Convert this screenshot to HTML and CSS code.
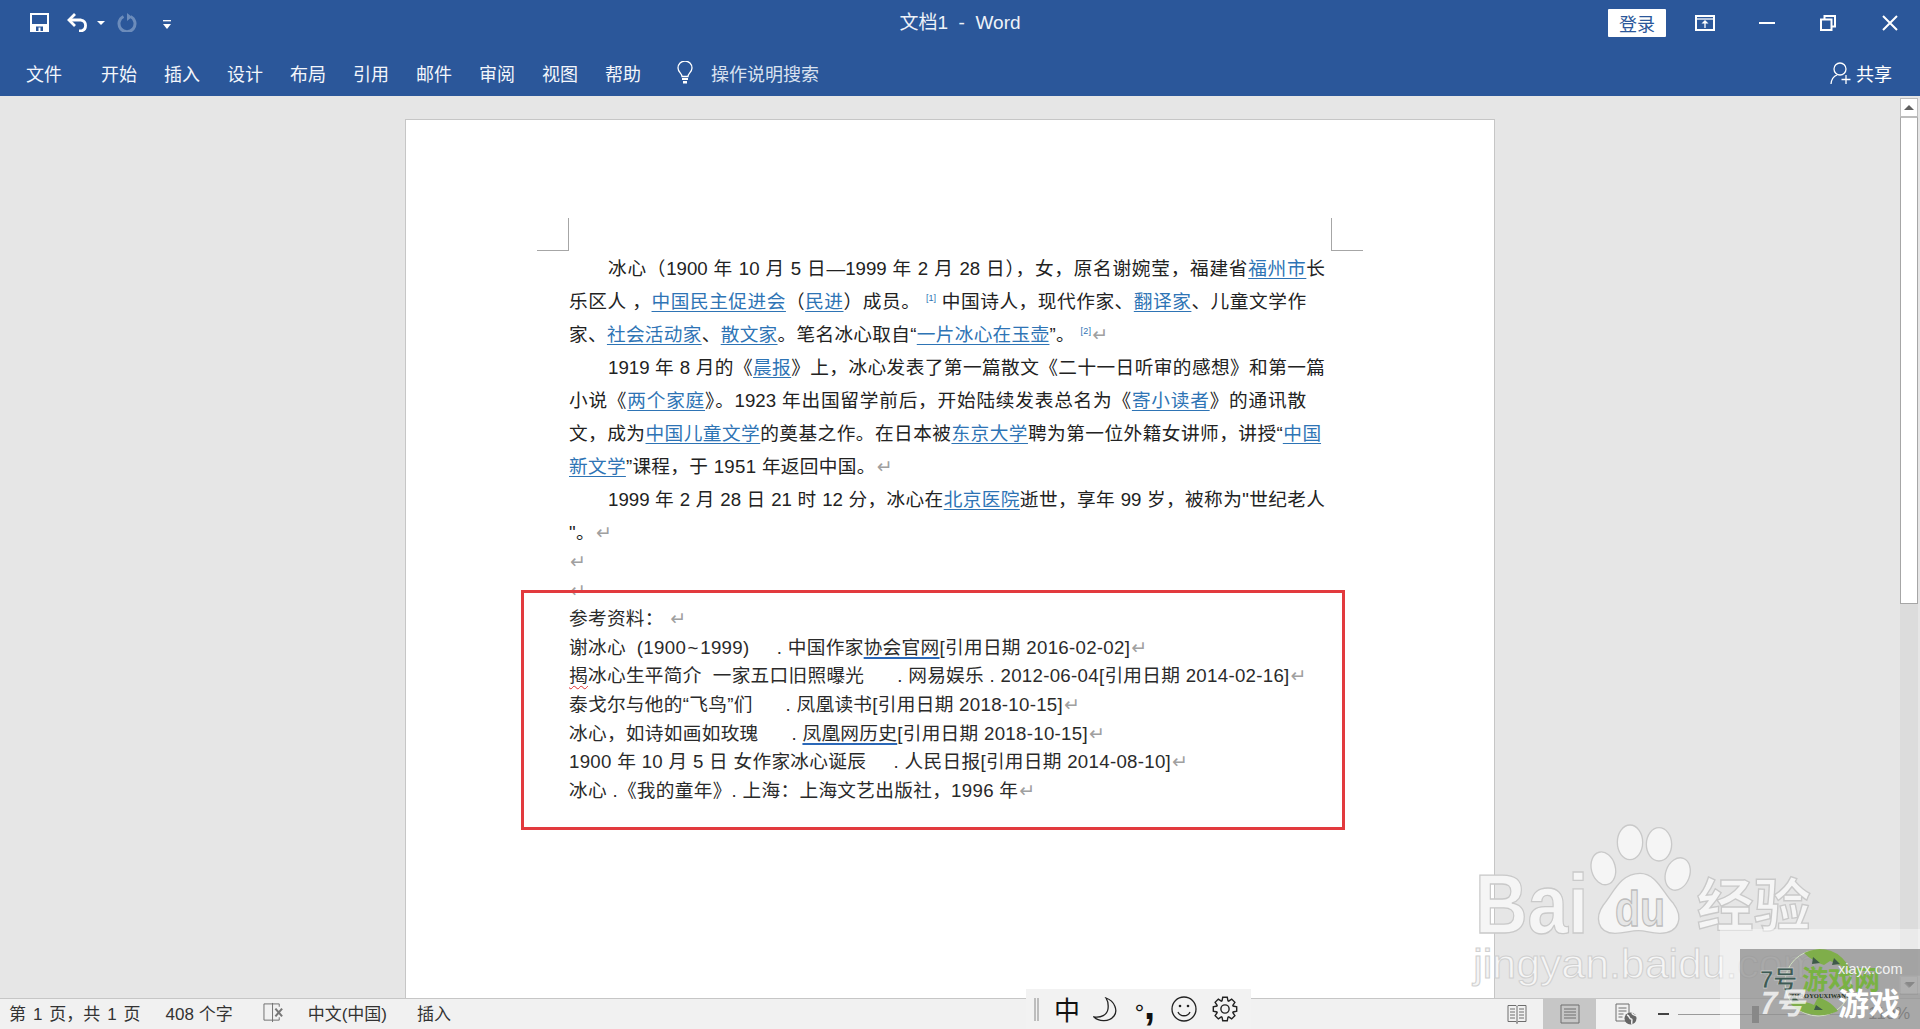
FILE: index.html
```html
<!DOCTYPE html>
<html lang="zh-CN">
<head>
<meta charset="utf-8">
<title>文档1 - Word</title>
<link rel="stylesheet" href="styles.css">
</head>
<body>
<div class="app">
  <header class="ribbon">
    <div class="titlerow">
      <div class="qat">
        <svg class="ico-save" viewBox="0 0 19 19"><path class="s-w" d="M1 1h17v17H1z"/><path class="f-w" d="M1 11h17v7H1z"/><path class="f-b" d="M6 13.500h7V18H6z"/><path class="f-w" d="M8.500 14.500h2V18h-2z"/></svg>
        <svg class="ico-undo" viewBox="0 0 22 19"><path class="s-w2" d="M2.500 7H14a5.600 5.600 0 0 1 0 11h-2"/><path class="s-w2" d="M8 1 2 7l6 6"/></svg>
        <svg class="ico-caret" viewBox="0 0 8 4"><path class="f-w" d="M0 0h8L4 4z"/></svg>
        <svg class="ico-redo" viewBox="0 0 20 19"><path class="s-d" d="M6.500 3.500a8 8 0 1 0 7 0"/><path class="f-d" d="M10 0v8l5-4z"/></svg>
        <svg class="ico-custom" viewBox="0 0 8 10"><path class="s-w1" d="M0 .7h8"/><path class="f-w" d="M0 4h8L4 9z"/></svg>
      </div>
      <div class="doc-title">文档1&nbsp;&nbsp;-&nbsp;&nbsp;Word</div>
      <div class="winctl">
        <button class="signin">登录</button>
        <svg class="ico-box" viewBox="0 0 20 16"><path class="s-w" d="M1 1h18v14H1z"/><path class="s-w1" d="M1 4h18"/><path class="s-w1" d="M10 13V7"/><path class="f-w" d="M6.500 8.500 10 5l3.500 3.500z"/></svg>
        <svg class="ico-min" viewBox="0 0 16 2"><path class="f-w" d="M0 0h16v2H0z"/></svg>
        <svg class="ico-restore" viewBox="0 0 16 16"><path class="s-w" d="M1 4.500h10.500V15H1z"/><path class="s-w" d="M4.500 4.500V1H15v10.500h-3.500"/></svg>
        <svg class="ico-close" viewBox="0 0 16 16"><path class="s-w" d="m1 1 14 14M15 1 1 15"/></svg>
      </div>
    </div>
    <div class="tabrow">
      <nav class="tabs">
        <span class="tab file">文件</span>
        <span class="tab">开始</span>
        <span class="tab">插入</span>
        <span class="tab">设计</span>
        <span class="tab">布局</span>
        <span class="tab">引用</span>
        <span class="tab">邮件</span>
        <span class="tab">审阅</span>
        <span class="tab">视图</span>
        <span class="tab">帮助</span>
      </nav>
      <div class="tell">
        <svg class="ico-bulb" viewBox="0 0 16 23"><path class="s-w1" d="M5 15.500c0-3-4-4.500-4-8.500a7 7 0 0 1 14 0c0 4-4 5.500-4 8.500z"/><path class="f-w" d="M5 17h6v2H5zM6 20h4v2.500H6z"/></svg>
        <span class="tell-text">操作说明搜索</span>
      </div>
      <div class="share">
        <svg class="ico-share" viewBox="0 0 22 23"><circle class="s-w1" cx="10" cy="7" r="6"/><path class="s-w1" d="M1 22c.5-5 3-8 6-9M16 13v9M11.500 17.500h9"/></svg>
        <span>共享</span>
      </div>
    </div>
  </header>

  <main class="workspace">
    <div class="doc-area">
      <section class="page">
        <i class="crop crop-l"></i>
        <i class="crop crop-r"></i>
        <div class="body-text">
          <div class="ln first w1">冰心（1900 年 10 月 5 日—1999 年 2 月 28 日），女，原名谢婉莹，福建省<a>福州市</a>长</div>
          <div class="ln w2">乐区人 ，<a>中国民主促进会</a>（<a>民进</a>）成员。 <sup>[1]</sup> 中国诗人，现代作家、<a>翻译家</a>、儿童文学作</div>
          <div class="ln">家、<a>社会活动家</a>、<a>散文家</a>。笔名冰心取自“<a>一片冰心在玉壶</a>”。 <sup>[2]</sup><span class="ret">↵</span></div>
          <div class="ln first w1">1919 年 8 月的《<a>晨报</a>》上，冰心发表了第一篇散文《二十一日听审的感想》和第一篇</div>
          <div class="ln w2">小说《<a>两个家庭</a>》。1923 年出国留学前后，开始陆续发表总名为《<a>寄小读者</a>》的通讯散</div>
          <div class="ln w3">文，成为<a>中国儿童文学</a>的奠基之作。在日本被<a>东京大学</a>聘为第一位外籍女讲师，讲授“<a>中国</a></div>
          <div class="ln"><a>新文学</a>”课程，于 1951 年返回中国。<span class="ret">↵</span></div>
          <div class="ln first w1">1999 年 2 月 28 日 21 时 12 分，冰心在<a>北京医院</a>逝世，享年 99 岁，被称为"世纪老人</div>
          <div class="ln">"。<span class="ret">↵</span></div>
        </div>
        <div class="refs">
          <div class="rl"><span class="ret">↵</span></div>
          <div class="rl"><span class="ret">↵</span></div>
          <div class="rl">参考资料： <span class="ret">↵</span></div>
          <div class="rl">谢冰心  <span class="tight">(1900 ~ 1999)</span>     . 中国作家<u class="gram">协会官网</u>[引用日期 2016-02-02]<span class="ret">↵</span></div>
          <div class="rl"><u class="spell">揭</u>冰心生平简介  一家五口旧照曝光      . 网易娱乐 . 2012-06-04[引用日期 2014-02-16]<span class="ret">↵</span></div>
          <div class="rl">泰戈尔与他的“飞鸟”们      . 凤凰读书[引用日期 2018-10-15]<span class="ret">↵</span></div>
          <div class="rl">冰心，如诗如画如玫瑰      . <u class="gram">凤凰网历史</u>[引用日期 2018-10-15]<span class="ret">↵</span></div>
          <div class="rl">1900 年 10 月 5 日 女作家冰心诞辰     . 人民日报[引用日期 2014-08-10]<span class="ret">↵</span></div>
          <div class="rl">冰心 .《我的童年》. 上海：上海文艺出版社，1996 年<span class="ret">↵</span></div>
        </div>
        <div class="redbox"></div>
      </section>
    </div>
    <aside class="vscroll">
      <div class="sb-up"><svg viewBox="0 0 10 5"><path d="M0 5h10L5 0z"/></svg></div>
      <div class="sb-thumb"></div>
      <div class="sb-track"></div>
      <div class="sb-down"><svg viewBox="0 0 10 5"><path d="M0 0h10L5 5z"/></svg></div>
    </aside>
  </main>

  <footer class="statusbar">
    <div class="st-left">
      <span class="st-page">第 1 页，共 1 页</span>
      <span class="st-words">408 个字</span>
      <svg class="ico-proof" viewBox="0 0 22 22"><path class="s-g" d="M10 2H1v17h9M10 1v20M10 2h7v3M10 19h7v-3"/><path class="s-g2" d="m13 7 7 8M20 7l-7 8"/></svg>
      <span class="st-lang">中文(中国)</span>
      <span class="st-ins">插入</span>
    </div>
    <div class="st-right">
      <svg class="v-read" viewBox="0 0 20 20"><path class="s-g" d="M1 1.500h8l1 1 1-1h8v16h-8l-1 1-1-1H1zM10 2.500V20M3 5h5M3 8h5M3 11h5M3 14h5M12 5h5M12 8h5M12 11h5M12 14h5"/></svg>
      <div class="v-print"><svg viewBox="0 0 20 20"><path class="s-g" d="M1 1h18v18H1zM4 5h12M4 8h12M4 11h12M4 14h12"/></svg></div>
      <svg class="v-web" viewBox="0 0 22 22"><path class="s-g" d="M1 1h13v17H1zM3.500 5h8M3.500 8h8M3.500 11h5M3.500 14h4"/><circle class="f-g" cx="15.500" cy="15.500" r="6"/><path class="s-wt" d="M12 12c3 1 2 4 4 4s0 3 1 5M17 10c0 2 3 2 4 3"/></svg>
      <div class="zoom">
        <i class="z-minus"></i>
        <div class="z-line"><i class="z-thumb"></i></div>
        <span class="z-val">110%</span>
      </div>
    </div>
  </footer>

  <div class="ime">
    <i class="ime-grip"></i>
    <span class="ime-zh">中</span>
    <svg class="ime-moon" viewBox="0 0 25 25"><path class="s-k" d="M13 1C22 4 25 14 21 19 16 25 6 25 1 20 8 21 14 18 15 12 15.500 8 15 4 13 1z"/></svg>
    <span class="ime-punc">°<b>,</b></span>
    <svg class="ime-smile" viewBox="0 0 26 26"><circle class="s-k" cx="13" cy="13" r="12"/><circle class="f-k" cx="9" cy="10" r="1.300"/><circle class="f-k" cx="17" cy="10" r="1.300"/><path class="s-k" d="M7 16c2 5 10 5 12 0"/></svg>
    <svg class="ime-gear" viewBox="-12 -12 24 24"><path class="s-k" d="M-2.740-7.520-2.100-10.800H2.100L2.740-7.520 3.380-7.250 6.150-9.120 9.120-6.150 7.250-3.380 7.520-2.740 10.800-2.100V2.100L7.520 2.740 7.250 3.380 9.120 6.150 6.150 9.120 3.380 7.250 2.740 7.520 2.100 10.800H-2.100L-2.740 7.520-3.380 7.250-6.150 9.120-9.120 6.150-7.250 3.380-7.520 2.740-10.800 2.100V-2.100L-7.520-2.740-7.250-3.380-9.120-6.150-6.150-9.120-3.380-7.250z"/><circle class="s-k" r="3.800"/></svg>
  </div>

  <svg class="wm-baidu" viewBox="0 0 1440 687">
    <text class="wm-b" x="105" y="398" textLength="340" lengthAdjust="spacingAndGlyphs">Bai</text>
    <g class="wm-paw">
      <ellipse cx="490" cy="205" rx="36" ry="50" transform="rotate(-15 490 205)"/>
      <ellipse cx="570" cy="127" rx="38" ry="52"/>
      <ellipse cx="657" cy="133" rx="38" ry="50"/>
      <ellipse cx="713" cy="222" rx="36" ry="50" transform="rotate(20 713 222)"/>
      <path d="M600 220c50 0 70 60 100 90 30 40 20 90-40 90-30 0-40-8-65-8s-40 8-70 8c-55 0-60-50-35-85 30-35 50-95 110-95z"/>
    </g>
    <text class="wm-du" x="525" y="378" textLength="150" lengthAdjust="spacingAndGlyphs">du</text>
    <text class="wm-jy" x="770" y="378" textLength="342" lengthAdjust="spacingAndGlyphs">经验</text>
    <text class="wm-url" x="100" y="533" textLength="1035" lengthAdjust="spacingAndGlyphs">jingyan.baidu.com</text>
  </svg>

  <svg class="wm-7h" viewBox="0 0 200 100">
    <path class="wm7-light" d="M0 0h200v100H0z"/>
    <path class="wm7-grey" d="M20 20h180v80H20z"/>
    <path class="wm7-ddown" d="M180 47h20v17h-20z"/>
    <path class="wm7-caret" d="M185 53h10l-5 5z"/>
    <circle class="wm7-ring" cx="98" cy="54" r="33"/>
    <path class="wm7-leaf" d="M84 24a33 33 0 0 1 46 16c-8-2-14-6-20-8l-6 4c-6-2-14-6-20-12zM70 74c10 12 32 16 48 8-6-8-14-12-20-14l-4 8c-8-4-16-4-24-2z"/>
    <path class="wm7-dark" d="M93 28l7 6-8 1zM114 29l6 6-8 1zM96 76l7 5h-9zM73 66l6 6-7 1z"/>
    <text class="wm7-7" x="40" y="59">7号</text>
    <text class="wm7-game" x="82" y="60">游戏网</text>
    <text class="wm7-py" x="70" y="69">ZHAOYOUXIWANG</text>
    <text class="wm7-url" x="118" y="45">xiayx.com</text>
    <text class="wm7-big" x="37" y="85">7号</text>
    <text class="wm7-big2" x="118" y="86">游戏</text>
  </svg>
</div>
</body>
</html>
```

FILE: styles.css
```css
* { box-sizing: border-box; }
html, body { margin: 0; padding: 0; height: 100%; overflow: hidden; }
body { font-family: "Liberation Sans", "Noto Sans CJK SC", sans-serif; }
svg { display: block; flex: none; fill: none; }

.app { position: relative; width: 1920px; height: 1029px; display: flex; flex-direction: column; background: #e6e6e6; overflow: hidden; }

/* shared icon paint */
.s-w { stroke: #fff; stroke-width: 2; }
.s-w1 { stroke: #fff; stroke-width: 1.300; }
.s-w2 { stroke: #fff; stroke-width: 2.800; }
.f-w { fill: #fff; }
.f-b { fill: #2b579a; }
.s-d { stroke: #6c8cbb; stroke-width: 3; }
.f-d { fill: #6c8cbb; }
.s-g { stroke: #6e6e6e; stroke-width: 1; }
.s-g2 { stroke: #777; stroke-width: 2.200; }
.f-g { fill: #666; }
.s-wt { stroke: #f1f1f1; stroke-width: 1.500; }
.s-k { stroke: #222; stroke-width: 1.300; fill: none; }
.f-k { fill: #222; }

/* ribbon */
.ribbon { height: 96px; flex: none; background: #2b579a; color: #fff; font-family: "Noto Sans CJK SC", sans-serif; }
.titlerow { height: 45px; display: grid; grid-template-columns: 1fr auto 1fr; align-items: center; }
.qat { display: flex; align-items: center; padding-left: 30px; }
.ico-save { width: 19px; height: 19px; }
.ico-undo { width: 22px; height: 19px; margin-left: 18px; }
.ico-caret { width: 8px; height: 4px; margin-left: 8px; }
.ico-redo { width: 20px; height: 19px; margin-left: 12px; }
.ico-custom { width: 8px; height: 10px; margin: 4px 0 0 26px; }
.doc-title { font-size: 19px; line-height: 24px; color: #eef2f8; font-family: "Liberation Sans", "Noto Sans CJK SC", sans-serif; }
.winctl { display: flex; align-items: center; justify-content: flex-end; }
.signin { width: 58px; height: 28px; padding: 0; border: 0; border-radius: 1px; background: #fff; color: #2b579a; font: 18px/28px "Noto Sans CJK SC", sans-serif; }
.ico-box { width: 20px; height: 16px; margin-left: 29px; }
.ico-min { width: 16px; height: 2px; margin-left: 44px; }
.ico-restore { width: 16px; height: 16px; margin-left: 45px; }
.ico-close { width: 16px; height: 16px; margin: 0 22px 0 46px; }

.tabrow { height: 51px; display: flex; align-items: flex-start; padding: 16px 28px 0 26px; }
.tabs { display: flex; gap: 27px; }
.tab { font-size: 18px; line-height: 24px; color: #f3f6fb; }
.tab.file { margin-right: 12px; }
.tell { display: flex; align-items: center; margin-left: 36px; }
.ico-bulb { width: 16px; height: 23px; margin-top: -1px; }
.tell-text { margin-left: 18px; font-size: 18px; line-height: 24px; color: #d9e2f0; }
.share { display: flex; align-items: center; margin-left: auto; font-size: 18px; line-height: 24px; }
.ico-share { width: 22px; height: 23px; margin-right: 4px; }

/* workspace */
.workspace { flex: 1; min-height: 0; display: flex; }
.doc-area { flex: 1; min-width: 0; overflow: hidden; padding-top: 23px; display: flex; justify-content: center; }
.page { position: relative; width: 1090px; min-height: 900px; background: #fff; border: 1px solid #c6c6c6; padding: 132px 0 0 163px; font-size: 18.670px; letter-spacing: .3px; color: #222; }
.crop { position: absolute; width: 32px; height: 33px; border-bottom: 1px solid #a6a6a6; }
.crop-l { left: 131px; top: 98px; border-right: 1px solid #a6a6a6; }
.crop-r { left: 925px; top: 98px; border-left: 1px solid #a6a6a6; }

.body-text { width: 770px; }
.ln { line-height: 33px; height: 33px; white-space: pre; }
.ln.first { padding-left: 39px; }
.w1, .w2, .w3 { text-align-last: justify; white-space: normal; letter-spacing: 0; }
.w1 { width: 756px; }
.w2 { width: 737px; }
.w3 { width: 752px; }
.ln a { color: #2e74b5; text-decoration: underline; text-underline-offset: 3px; }
sup { font-size: 9px; line-height: 0; color: #2e74b5; vertical-align: 7px; }
.ret { font: 19px/1 "DejaVu Sans", sans-serif; color: #a0a0a0; margin-left: 1px; }

.refs { margin-top: -1px; }
.rl { height: 28.600px; line-height: 28.600px; white-space: pre; color: #2a2a2a; }
.tight { word-spacing: -4px; }
.gram { text-decoration: underline; text-decoration-color: #2b68b8; text-decoration-thickness: 1.500px; text-underline-offset: 3px; }
.spell { text-decoration: underline wavy #e03030; text-decoration-thickness: 1px; text-underline-offset: 3px; }
.redbox { position: absolute; left: 115px; top: 470px; width: 824px; height: 240px; border: 3px solid #e23a3e; }

/* scrollbar */
.vscroll { width: 20px; flex: none; padding: 2px 2px 0 0; display: flex; flex-direction: column; }
.sb-up, .sb-down { height: 19px; flex: none; background: #fff; border: 1px solid #bdbdbd; display: flex; align-items: center; justify-content: center; }
.sb-up svg, .sb-down svg { width: 10px; height: 5px; fill: #606060; }
.sb-thumb { height: 487px; flex: none; background: #fff; border: 1px solid #a6a6a6; border-top-color: #bdbdbd; }
.sb-track { flex: 1; background: #dcdcdc; }
.sb-down { background: #e6e6e6; margin-bottom: 3px; }

/* status bar */
.statusbar { height: 31px; flex: none; background: #f1f1f1; border-top: 1px solid #c6c6c6; display: flex; align-items: stretch; font-family: "Liberation Sans", "Noto Sans CJK SC", sans-serif; font-size: 17px; color: #333; }
.st-left { display: flex; align-items: center; padding: 0 0 3px 9px; }
.st-page { word-spacing: 2.200px; }
.st-words { margin-left: 25px; }
.ico-proof { width: 21px; height: 21px; margin-left: 30px; }
.st-lang { margin-left: 24px; }
.st-ins { margin-left: 30px; }
.st-right { margin-left: auto; display: flex; align-items: center; padding-right: 14px; }
.v-read { width: 20px; height: 20px; }
.v-print { width: 53px; height: 30px; margin-left: 16px; background: #c6c6c6; display: flex; align-items: center; justify-content: center; }
.v-print svg { width: 20px; height: 20px; }
.v-web { width: 22px; height: 22px; margin-left: 19px; }
.zoom { display: flex; align-items: center; margin-left: 21px; }
.z-minus { width: 11px; height: 2px; background: #444; }
.z-line { position: relative; width: 182px; height: 1px; margin-left: 9px; background: #9a9a9a; }
.z-thumb { position: absolute; left: 74px; top: -8px; width: 7px; height: 17px; background: #666; }
.z-val { margin-left: 8px; width: 38px; color: #444; }

/* IME */
.ime { position: absolute; left: 1026px; top: 989px; width: 225px; height: 40px; background: #f2f2f2; display: flex; align-items: center; }
.ime-grip { width: 5px; height: 23px; margin-left: 8px; border-left: 2px solid #bdbdbd; border-right: 2px solid #bdbdbd; }
.ime-zh { margin-left: 15px; font: 26px/30px "Noto Sans CJK SC", sans-serif; color: #111; }
.ime-moon { width: 25px; height: 25px; margin-left: 13px; }
.ime-punc { width: 24px; margin-left: 17px; font: 24px/30px "Noto Sans CJK SC", sans-serif; color: #111; white-space: nowrap; }
.ime-punc b { font: 700 40px/30px "Liberation Sans", sans-serif; vertical-align: 4px; }
.ime-smile { width: 26px; height: 26px; margin-left: 12px; }
.ime-gear { width: 26px; height: 26px; margin-left: 15px; }

/* watermarks */
.wm-baidu { position: absolute; left: 1440px; top: 800px; width: 480px; height: 229px; }
.wm-b, .wm-du, .wm-jy { font-family: "Liberation Sans", "Noto Sans CJK SC", sans-serif; font-weight: 700; }
.wm-b { font-size: 250px; fill: #f5f5f5; stroke: #c9c9c9; stroke-width: 4; }
.wm-paw { fill: #f5f5f5; stroke: #c9c9c9; stroke-width: 4; }
.wm-du { font-size: 150px; fill: #e6e6e6; stroke: #bdbdbd; stroke-width: 4; }
.wm-jy { font-size: 171px; fill: #f5f5f5; stroke: #c9c9c9; stroke-width: 4; }
.wm-url { font-family: "Liberation Sans", sans-serif; font-size: 120px; fill: #f5f5f5; stroke: #d0d0d0; stroke-width: 3; }

.wm-7h { position: absolute; left: 1720px; top: 929px; width: 200px; height: 100px; }
.wm7-light { fill: rgba(255, 255, 255, .4); }
.wm7-grey { fill: rgba(120, 120, 120, .62); }
.wm7-ddown { fill: rgba(255, 255, 255, .12); stroke: #b0b0b0; stroke-width: .5; }
.wm7-caret { fill: #888; }
.wm7-ring { fill: none; stroke: #cfe0c0; stroke-width: 1; }
.wm7-leaf { fill: #7fae4a; }
.wm7-dark { fill: #3e5a48; }
.wm7-7 { font: 700 24px "Liberation Sans", "Noto Sans CJK SC", sans-serif; fill: #3e5a54; stroke: #e6e6e6; stroke-width: .4; }
.wm7-game { font: 700 26px "Noto Sans CJK SC", sans-serif; fill: #79b243; }
.wm7-py { font: 700 6.500px "Liberation Serif", serif; fill: #23311c; }
.wm7-url { font: 14.500px "Liberation Sans", sans-serif; fill: #f2f2f2; }
.wm7-big { font: 700 italic 30px "Noto Sans CJK SC", sans-serif; fill: rgba(255, 255, 255, .75); }
.wm7-big2 { font: 700 31px "Noto Sans CJK SC", sans-serif; fill: #fff; }
```
